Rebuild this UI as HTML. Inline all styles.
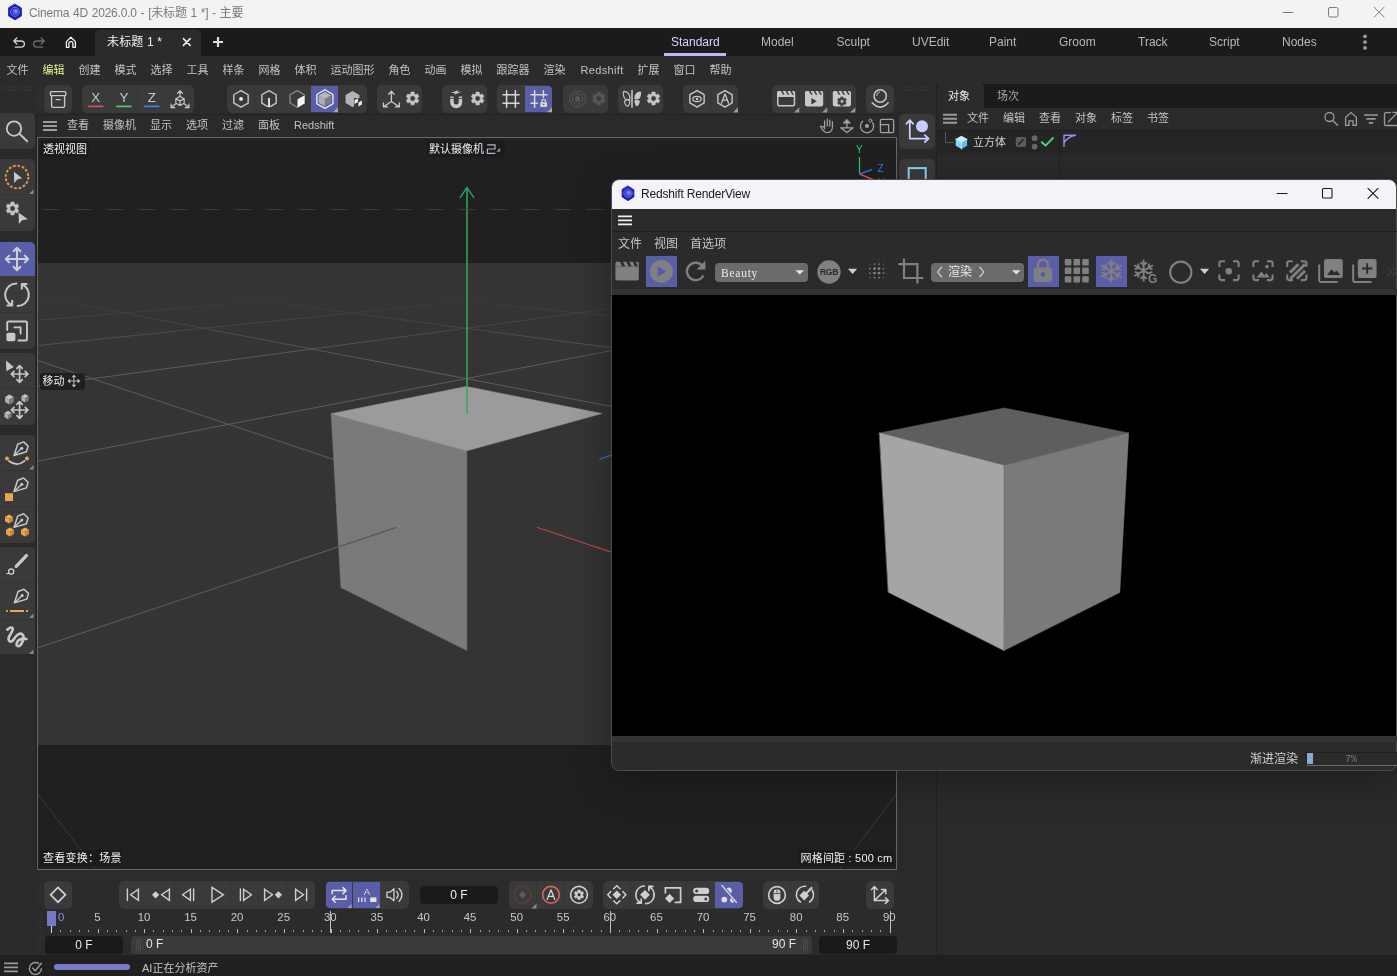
<!DOCTYPE html>
<html lang="zh"><head><meta charset="utf-8"><title>Cinema 4D</title>
<style>
html,body{margin:0;padding:0}
html{background:#2a2a2a}
body{width:1397px;height:976px;position:relative;overflow:hidden;opacity:.999;background:#2a2a2a;font-family:"Liberation Sans","Noto Sans CJK SC",sans-serif;font-size:11px;color:#c3c3c3}
.t{position:absolute;white-space:nowrap;display:block}
.b{position:absolute;box-sizing:border-box}
svg{position:absolute;left:0;top:0;overflow:visible}
svg text{font-family:"Liberation Sans","Noto Sans CJK SC",sans-serif}
</style></head><body>
<!-- base -->
<div class="b" style="left:0px;top:0px;width:1397px;height:28px;background:#f3f3f3;"></div>
<span class="t" style="left:29px;top:5px;font-size:12px;line-height:17px;height:17px;color:#7a7a7a;letter-spacing:-0.19px;word-spacing:0.6px">Cinema 4D 2026.0.0 - [未标题 1 *] - 主要</span>
<div class="b" style="left:0px;top:28px;width:1397px;height:28px;background:#1b1b1b;"></div>
<div class="b" style="left:95px;top:30px;width:106px;height:26px;background:#2b2b2b;border-radius:5px 5px 0 0"></div>
<span class="t" style="left:107px;top:34px;font-size:12px;line-height:17px;height:17px;color:#f0f0f0;letter-spacing:0.15px">未标题 1 *</span>
<span class="t" style="left:671px;top:34px;font-size:12px;line-height:16px;height:16px;color:#d6d6ff;">Standard</span>
<span class="t" style="left:761px;top:34px;font-size:12px;line-height:16px;height:16px;color:#b8b8b8;">Model</span>
<span class="t" style="left:836.6px;top:34px;font-size:12px;line-height:16px;height:16px;color:#b8b8b8;">Sculpt</span>
<span class="t" style="left:912px;top:34px;font-size:12px;line-height:16px;height:16px;color:#b8b8b8;">UVEdit</span>
<span class="t" style="left:989px;top:34px;font-size:12px;line-height:16px;height:16px;color:#b8b8b8;">Paint</span>
<span class="t" style="left:1059px;top:34px;font-size:12px;line-height:16px;height:16px;color:#b8b8b8;">Groom</span>
<span class="t" style="left:1138px;top:34px;font-size:12px;line-height:16px;height:16px;color:#b8b8b8;">Track</span>
<span class="t" style="left:1209px;top:34px;font-size:12px;line-height:16px;height:16px;color:#b8b8b8;">Script</span>
<span class="t" style="left:1282px;top:34px;font-size:12px;line-height:16px;height:16px;color:#b8b8b8;">Nodes</span>
<div class="b" style="left:664px;top:53px;width:62px;height:3px;background:#b9b9f5;"></div>
<div class="b" style="left:0px;top:56px;width:1397px;height:28px;background:#2b2b2b;"></div>
<span class="t" style="left:6.5px;top:62px;font-size:11px;line-height:16px;height:16px;color:#c3c3c3;">文件</span>
<span class="t" style="left:42.5px;top:62px;font-size:11px;line-height:16px;height:16px;color:#e6f08c;">编辑</span>
<span class="t" style="left:78.5px;top:62px;font-size:11px;line-height:16px;height:16px;color:#c3c3c3;">创建</span>
<span class="t" style="left:114.5px;top:62px;font-size:11px;line-height:16px;height:16px;color:#c3c3c3;">模式</span>
<span class="t" style="left:150.5px;top:62px;font-size:11px;line-height:16px;height:16px;color:#c3c3c3;">选择</span>
<span class="t" style="left:186.5px;top:62px;font-size:11px;line-height:16px;height:16px;color:#c3c3c3;">工具</span>
<span class="t" style="left:222.5px;top:62px;font-size:11px;line-height:16px;height:16px;color:#c3c3c3;">样条</span>
<span class="t" style="left:258.5px;top:62px;font-size:11px;line-height:16px;height:16px;color:#c3c3c3;">网格</span>
<span class="t" style="left:294.5px;top:62px;font-size:11px;line-height:16px;height:16px;color:#c3c3c3;">体积</span>
<span class="t" style="left:330.5px;top:62px;font-size:11px;line-height:16px;height:16px;color:#c3c3c3;">运动图形</span>
<span class="t" style="left:388.5px;top:62px;font-size:11px;line-height:16px;height:16px;color:#c3c3c3;">角色</span>
<span class="t" style="left:424.5px;top:62px;font-size:11px;line-height:16px;height:16px;color:#c3c3c3;">动画</span>
<span class="t" style="left:460.5px;top:62px;font-size:11px;line-height:16px;height:16px;color:#c3c3c3;">模拟</span>
<span class="t" style="left:496.5px;top:62px;font-size:11px;line-height:16px;height:16px;color:#c3c3c3;">跟踪器</span>
<span class="t" style="left:543.5px;top:62px;font-size:11px;line-height:16px;height:16px;color:#c3c3c3;">渲染</span>
<span class="t" style="left:580.5px;top:62px;font-size:11px;line-height:16px;height:16px;color:#c3c3c3;letter-spacing:0.35px">Redshift</span>
<span class="t" style="left:637.5px;top:62px;font-size:11px;line-height:16px;height:16px;color:#c3c3c3;">扩展</span>
<span class="t" style="left:673.5px;top:62px;font-size:11px;line-height:16px;height:16px;color:#c3c3c3;">窗口</span>
<span class="t" style="left:709.5px;top:62px;font-size:11px;line-height:16px;height:16px;color:#c3c3c3;">帮助</span>
<div class="b" style="left:0px;top:84px;width:937px;height:30px;background:#2b2b2b;"></div>
<div class="b" style="left:44px;top:85px;width:28px;height:28px;background:#3a3a3a;border-radius:5px"></div>
<div class="b" style="left:82px;top:85px;width:112px;height:28px;background:#3a3a3a;border-radius:5px"></div>
<div class="b" style="left:227px;top:85px;width:140px;height:28px;background:#3a3a3a;border-radius:5px"></div>
<div class="b" style="left:377px;top:85px;width:45px;height:28px;background:#3a3a3a;border-radius:5px"></div>
<div class="b" style="left:442px;top:85px;width:45px;height:28px;background:#3a3a3a;border-radius:5px"></div>
<div class="b" style="left:497px;top:85px;width:55px;height:28px;background:#3a3a3a;border-radius:5px"></div>
<div class="b" style="left:563px;top:85px;width:45px;height:28px;background:#3a3a3a;border-radius:5px"></div>
<div class="b" style="left:618px;top:85px;width:45px;height:28px;background:#3a3a3a;border-radius:5px"></div>
<div class="b" style="left:683px;top:85px;width:55px;height:28px;background:#3a3a3a;border-radius:5px"></div>
<div class="b" style="left:772px;top:85px;width:84px;height:28px;background:#3a3a3a;border-radius:5px"></div>
<div class="b" style="left:866px;top:85px;width:28px;height:28px;background:#3a3a3a;border-radius:5px"></div>
<div class="b" style="left:311px;top:85.8px;width:27.2px;height:26.4px;background:#5a5ea8;"></div>
<div class="b" style="left:525px;top:85.8px;width:27px;height:26.4px;background:#5a5ea8;border-radius:0 4px 4px 0"></div>
<div class="b" style="left:109.3px;top:85px;width:1px;height:28px;background:#343434;"></div>
<div class="b" style="left:137.3px;top:85px;width:1px;height:28px;background:#343434;"></div>
<div class="b" style="left:165.3px;top:85px;width:1px;height:28px;background:#343434;"></div>
<div class="b" style="left:254.3px;top:85px;width:1px;height:28px;background:#343434;"></div>
<div class="b" style="left:282.3px;top:85px;width:1px;height:28px;background:#343434;"></div>
<div class="b" style="left:710.3px;top:85px;width:1px;height:28px;background:#343434;"></div>
<div class="b" style="left:799.3px;top:85px;width:1px;height:28px;background:#343434;"></div>
<div class="b" style="left:827.3px;top:85px;width:1px;height:28px;background:#343434;"></div>
<div class="b" style="left:36px;top:114px;width:861px;height:24px;background:#2a2a2a;"></div>
<div class="b" style="left:36px;top:114px;width:861px;height:1px;background:#222;"></div>
<div class="b" style="left:36px;top:114px;width:1px;height:756px;background:#202020;"></div>
<span class="t" style="left:67px;top:117px;font-size:11px;line-height:16px;height:16px;color:#c3c3c3;">查看</span>
<span class="t" style="left:103px;top:117px;font-size:11px;line-height:16px;height:16px;color:#c3c3c3;">摄像机</span>
<span class="t" style="left:150px;top:117px;font-size:11px;line-height:16px;height:16px;color:#c3c3c3;">显示</span>
<span class="t" style="left:186px;top:117px;font-size:11px;line-height:16px;height:16px;color:#c3c3c3;">选项</span>
<span class="t" style="left:222px;top:117px;font-size:11px;line-height:16px;height:16px;color:#c3c3c3;">过滤</span>
<span class="t" style="left:258px;top:117px;font-size:11px;line-height:16px;height:16px;color:#c3c3c3;">面板</span>
<span class="t" style="left:294px;top:117px;font-size:11px;line-height:16px;height:16px;color:#c3c3c3;">Redshift</span>
<div class="b" style="left:0px;top:113px;width:35px;height:36px;background:#3a3a3a;border-radius:0 5px 5px 0"></div>
<div class="b" style="left:0px;top:159px;width:35px;height:72px;background:#3a3a3a;border-radius:0 5px 5px 0"></div>
<div class="b" style="left:0px;top:242px;width:35px;height:107px;background:#3a3a3a;border-radius:0 5px 5px 0"></div>
<div class="b" style="left:0px;top:353px;width:35px;height:72px;background:#3a3a3a;border-radius:0 5px 5px 0"></div>
<div class="b" style="left:0px;top:435px;width:35px;height:108px;background:#3a3a3a;border-radius:0 5px 5px 0"></div>
<div class="b" style="left:0px;top:547px;width:35px;height:107px;background:#3a3a3a;border-radius:0 5px 5px 0"></div>
<div class="b" style="left:0px;top:242px;width:35px;height:34px;background:#5a5ea8;border-radius:0 5px 0 0"></div>
<div class="b" style="left:0px;top:194.3px;width:35px;height:1px;background:#333;"></div>
<div class="b" style="left:0px;top:311.6px;width:35px;height:1px;background:#333;"></div>
<div class="b" style="left:0px;top:388.4px;width:35px;height:1px;background:#333;"></div>
<div class="b" style="left:0px;top:470.2px;width:35px;height:1px;background:#333;"></div>
<div class="b" style="left:0px;top:506.3px;width:35px;height:1px;background:#333;"></div>
<div class="b" style="left:0px;top:582.4px;width:35px;height:1px;background:#333;"></div>
<div class="b" style="left:0px;top:618.6px;width:35px;height:1px;background:#333;"></div>
<div class="b" style="left:897px;top:84px;width:40px;height:872px;background:#2a2a2a;"></div>
<div class="b" style="left:936px;top:84px;width:1px;height:872px;background:#222;"></div>
<div class="b" style="left:899px;top:114px;width:36px;height:35px;background:#3a3a3a;border-radius:5px"></div>
<div class="b" style="left:899px;top:159px;width:36px;height:40px;background:#3a3a3a;border-radius:5px"></div>
<div class="b" style="left:937px;top:84px;width:460px;height:872px;background:#2a2a2a;"></div>
<div class="b" style="left:937px;top:84px;width:460px;height:24px;background:#1b1b1b;"></div>
<div class="b" style="left:937px;top:84px;width:47px;height:24px;background:#2b2b2b;border-radius:4px 4px 0 0"></div>
<span class="t" style="left:948px;top:88px;font-size:11px;line-height:16px;height:16px;color:#f0f0f0;">对象</span>
<span class="t" style="left:997px;top:88px;font-size:11px;line-height:16px;height:16px;color:#a8a8a8;">场次</span>
<span class="t" style="left:967px;top:110px;font-size:11px;line-height:16px;height:16px;color:#c3c3c3;">文件</span>
<span class="t" style="left:1003px;top:110px;font-size:11px;line-height:16px;height:16px;color:#c3c3c3;">编辑</span>
<span class="t" style="left:1039px;top:110px;font-size:11px;line-height:16px;height:16px;color:#c3c3c3;">查看</span>
<span class="t" style="left:1075px;top:110px;font-size:11px;line-height:16px;height:16px;color:#c3c3c3;">对象</span>
<span class="t" style="left:1111px;top:110px;font-size:11px;line-height:16px;height:16px;color:#c3c3c3;">标签</span>
<span class="t" style="left:1147px;top:110px;font-size:11px;line-height:16px;height:16px;color:#c3c3c3;">书签</span>
<div class="b" style="left:937px;top:130px;width:460px;height:1px;background:#1f1f1f;"></div>
<div class="b" style="left:937px;top:131px;width:460px;height:22px;background:#252525;"></div>
<div class="b" style="left:1059px;top:131px;width:1px;height:640px;background:#1f1f1f;"></div>
<span class="t" style="left:973px;top:134px;font-size:11px;line-height:16px;height:16px;color:#d0d0d0;">立方体</span>
<div class="b" style="left:0px;top:870px;width:897px;height:86px;background:#2b2b2b;"></div>
<div class="b" style="left:44px;top:881px;width:28px;height:28px;background:#3a3a3a;border-radius:5px"></div>
<div class="b" style="left:119px;top:881px;width:196px;height:28px;background:#3a3a3a;border-radius:5px"></div>
<div class="b" style="left:326px;top:881px;width:83px;height:28px;background:#3a3a3a;border-radius:5px"></div>
<div class="b" style="left:509px;top:881px;width:84px;height:28px;background:#3a3a3a;border-radius:5px"></div>
<div class="b" style="left:603px;top:881px;width:140px;height:28px;background:#3a3a3a;border-radius:5px"></div>
<div class="b" style="left:763px;top:881px;width:56px;height:28px;background:#3a3a3a;border-radius:5px"></div>
<div class="b" style="left:866px;top:881px;width:28px;height:28px;background:#3a3a3a;border-radius:5px"></div>
<div class="b" style="left:146.3px;top:881px;width:1px;height:28px;background:#343434;"></div>
<div class="b" style="left:174.3px;top:881px;width:1px;height:28px;background:#343434;"></div>
<div class="b" style="left:202.3px;top:881px;width:1px;height:28px;background:#343434;"></div>
<div class="b" style="left:230.3px;top:881px;width:1px;height:28px;background:#343434;"></div>
<div class="b" style="left:258.3px;top:881px;width:1px;height:28px;background:#343434;"></div>
<div class="b" style="left:286.3px;top:881px;width:1px;height:28px;background:#343434;"></div>
<div class="b" style="left:379.3px;top:881px;width:1px;height:28px;background:#343434;"></div>
<div class="b" style="left:536.3px;top:881px;width:1px;height:28px;background:#343434;"></div>
<div class="b" style="left:564.3px;top:881px;width:1px;height:28px;background:#343434;"></div>
<div class="b" style="left:630.3px;top:881px;width:1px;height:28px;background:#343434;"></div>
<div class="b" style="left:658.3px;top:881px;width:1px;height:28px;background:#343434;"></div>
<div class="b" style="left:686.3px;top:881px;width:1px;height:28px;background:#343434;"></div>
<div class="b" style="left:790.3px;top:881px;width:1px;height:28px;background:#343434;"></div>
<div class="b" style="left:326px;top:881.8px;width:26px;height:26.4px;background:#5a5ea8;border-radius:4px 0 0 4px"></div>
<div class="b" style="left:353px;top:881.8px;width:27px;height:26.4px;background:#5a5ea8;"></div>
<div class="b" style="left:715px;top:881.8px;width:27.6px;height:26.4px;background:#5a5ea8;border-radius:0 4px 4px 0"></div>
<div class="b" style="left:420px;top:886px;width:78px;height:18px;background:#1a1a1a;border-radius:4px"></div>
<span class="t" style="left:420px;top:887px;font-size:12px;line-height:16px;height:16px;color:#f0f0f0;width:78px;text-align:center">0 F</span>
<div class="b" style="left:44px;top:927px;width:853px;height:1px;background:#2e2e2e;"></div>
<div class="b" style="left:51px;top:929px;width:1px;height:4px;background:#b8b8b8;"></div>
<div class="b" style="left:60px;top:930px;width:1px;height:2px;background:#9a9a9a;"></div>
<div class="b" style="left:70px;top:930px;width:1px;height:2px;background:#9a9a9a;"></div>
<div class="b" style="left:79px;top:930px;width:1px;height:2px;background:#9a9a9a;"></div>
<div class="b" style="left:88px;top:930px;width:1px;height:2px;background:#9a9a9a;"></div>
<div class="b" style="left:98px;top:929px;width:1px;height:4px;background:#b8b8b8;"></div>
<div class="b" style="left:107px;top:930px;width:1px;height:2px;background:#9a9a9a;"></div>
<div class="b" style="left:116px;top:930px;width:1px;height:2px;background:#9a9a9a;"></div>
<div class="b" style="left:126px;top:930px;width:1px;height:2px;background:#9a9a9a;"></div>
<div class="b" style="left:135px;top:930px;width:1px;height:2px;background:#9a9a9a;"></div>
<div class="b" style="left:144px;top:929px;width:1px;height:4px;background:#b8b8b8;"></div>
<div class="b" style="left:153px;top:930px;width:1px;height:2px;background:#9a9a9a;"></div>
<div class="b" style="left:163px;top:930px;width:1px;height:2px;background:#9a9a9a;"></div>
<div class="b" style="left:172px;top:930px;width:1px;height:2px;background:#9a9a9a;"></div>
<div class="b" style="left:181px;top:930px;width:1px;height:2px;background:#9a9a9a;"></div>
<div class="b" style="left:191px;top:929px;width:1px;height:4px;background:#b8b8b8;"></div>
<div class="b" style="left:200px;top:930px;width:1px;height:2px;background:#9a9a9a;"></div>
<div class="b" style="left:209px;top:930px;width:1px;height:2px;background:#9a9a9a;"></div>
<div class="b" style="left:219px;top:930px;width:1px;height:2px;background:#9a9a9a;"></div>
<div class="b" style="left:228px;top:930px;width:1px;height:2px;background:#9a9a9a;"></div>
<div class="b" style="left:237px;top:929px;width:1px;height:4px;background:#b8b8b8;"></div>
<div class="b" style="left:247px;top:930px;width:1px;height:2px;background:#9a9a9a;"></div>
<div class="b" style="left:256px;top:930px;width:1px;height:2px;background:#9a9a9a;"></div>
<div class="b" style="left:265px;top:930px;width:1px;height:2px;background:#9a9a9a;"></div>
<div class="b" style="left:275px;top:930px;width:1px;height:2px;background:#9a9a9a;"></div>
<div class="b" style="left:284px;top:929px;width:1px;height:4px;background:#b8b8b8;"></div>
<div class="b" style="left:293px;top:930px;width:1px;height:2px;background:#9a9a9a;"></div>
<div class="b" style="left:303px;top:930px;width:1px;height:2px;background:#9a9a9a;"></div>
<div class="b" style="left:312px;top:930px;width:1px;height:2px;background:#9a9a9a;"></div>
<div class="b" style="left:321px;top:930px;width:1px;height:2px;background:#9a9a9a;"></div>
<div class="b" style="left:331px;top:929px;width:1px;height:4px;background:#b8b8b8;"></div>
<div class="b" style="left:340px;top:930px;width:1px;height:2px;background:#9a9a9a;"></div>
<div class="b" style="left:349px;top:930px;width:1px;height:2px;background:#9a9a9a;"></div>
<div class="b" style="left:358px;top:930px;width:1px;height:2px;background:#9a9a9a;"></div>
<div class="b" style="left:368px;top:930px;width:1px;height:2px;background:#9a9a9a;"></div>
<div class="b" style="left:377px;top:929px;width:1px;height:4px;background:#b8b8b8;"></div>
<div class="b" style="left:386px;top:930px;width:1px;height:2px;background:#9a9a9a;"></div>
<div class="b" style="left:396px;top:930px;width:1px;height:2px;background:#9a9a9a;"></div>
<div class="b" style="left:405px;top:930px;width:1px;height:2px;background:#9a9a9a;"></div>
<div class="b" style="left:414px;top:930px;width:1px;height:2px;background:#9a9a9a;"></div>
<div class="b" style="left:424px;top:929px;width:1px;height:4px;background:#b8b8b8;"></div>
<div class="b" style="left:433px;top:930px;width:1px;height:2px;background:#9a9a9a;"></div>
<div class="b" style="left:442px;top:930px;width:1px;height:2px;background:#9a9a9a;"></div>
<div class="b" style="left:452px;top:930px;width:1px;height:2px;background:#9a9a9a;"></div>
<div class="b" style="left:461px;top:930px;width:1px;height:2px;background:#9a9a9a;"></div>
<div class="b" style="left:470px;top:929px;width:1px;height:4px;background:#b8b8b8;"></div>
<div class="b" style="left:480px;top:930px;width:1px;height:2px;background:#9a9a9a;"></div>
<div class="b" style="left:489px;top:930px;width:1px;height:2px;background:#9a9a9a;"></div>
<div class="b" style="left:498px;top:930px;width:1px;height:2px;background:#9a9a9a;"></div>
<div class="b" style="left:508px;top:930px;width:1px;height:2px;background:#9a9a9a;"></div>
<div class="b" style="left:517px;top:929px;width:1px;height:4px;background:#b8b8b8;"></div>
<div class="b" style="left:526px;top:930px;width:1px;height:2px;background:#9a9a9a;"></div>
<div class="b" style="left:535px;top:930px;width:1px;height:2px;background:#9a9a9a;"></div>
<div class="b" style="left:545px;top:930px;width:1px;height:2px;background:#9a9a9a;"></div>
<div class="b" style="left:554px;top:930px;width:1px;height:2px;background:#9a9a9a;"></div>
<div class="b" style="left:563px;top:929px;width:1px;height:4px;background:#b8b8b8;"></div>
<div class="b" style="left:573px;top:930px;width:1px;height:2px;background:#9a9a9a;"></div>
<div class="b" style="left:582px;top:930px;width:1px;height:2px;background:#9a9a9a;"></div>
<div class="b" style="left:591px;top:930px;width:1px;height:2px;background:#9a9a9a;"></div>
<div class="b" style="left:601px;top:930px;width:1px;height:2px;background:#9a9a9a;"></div>
<div class="b" style="left:610px;top:929px;width:1px;height:4px;background:#b8b8b8;"></div>
<div class="b" style="left:619px;top:930px;width:1px;height:2px;background:#9a9a9a;"></div>
<div class="b" style="left:629px;top:930px;width:1px;height:2px;background:#9a9a9a;"></div>
<div class="b" style="left:638px;top:930px;width:1px;height:2px;background:#9a9a9a;"></div>
<div class="b" style="left:647px;top:930px;width:1px;height:2px;background:#9a9a9a;"></div>
<div class="b" style="left:657px;top:929px;width:1px;height:4px;background:#b8b8b8;"></div>
<div class="b" style="left:666px;top:930px;width:1px;height:2px;background:#9a9a9a;"></div>
<div class="b" style="left:675px;top:930px;width:1px;height:2px;background:#9a9a9a;"></div>
<div class="b" style="left:685px;top:930px;width:1px;height:2px;background:#9a9a9a;"></div>
<div class="b" style="left:694px;top:930px;width:1px;height:2px;background:#9a9a9a;"></div>
<div class="b" style="left:703px;top:929px;width:1px;height:4px;background:#b8b8b8;"></div>
<div class="b" style="left:713px;top:930px;width:1px;height:2px;background:#9a9a9a;"></div>
<div class="b" style="left:722px;top:930px;width:1px;height:2px;background:#9a9a9a;"></div>
<div class="b" style="left:731px;top:930px;width:1px;height:2px;background:#9a9a9a;"></div>
<div class="b" style="left:740px;top:930px;width:1px;height:2px;background:#9a9a9a;"></div>
<div class="b" style="left:750px;top:929px;width:1px;height:4px;background:#b8b8b8;"></div>
<div class="b" style="left:759px;top:930px;width:1px;height:2px;background:#9a9a9a;"></div>
<div class="b" style="left:768px;top:930px;width:1px;height:2px;background:#9a9a9a;"></div>
<div class="b" style="left:778px;top:930px;width:1px;height:2px;background:#9a9a9a;"></div>
<div class="b" style="left:787px;top:930px;width:1px;height:2px;background:#9a9a9a;"></div>
<div class="b" style="left:796px;top:929px;width:1px;height:4px;background:#b8b8b8;"></div>
<div class="b" style="left:806px;top:930px;width:1px;height:2px;background:#9a9a9a;"></div>
<div class="b" style="left:815px;top:930px;width:1px;height:2px;background:#9a9a9a;"></div>
<div class="b" style="left:824px;top:930px;width:1px;height:2px;background:#9a9a9a;"></div>
<div class="b" style="left:834px;top:930px;width:1px;height:2px;background:#9a9a9a;"></div>
<div class="b" style="left:843px;top:929px;width:1px;height:4px;background:#b8b8b8;"></div>
<div class="b" style="left:852px;top:930px;width:1px;height:2px;background:#9a9a9a;"></div>
<div class="b" style="left:862px;top:930px;width:1px;height:2px;background:#9a9a9a;"></div>
<div class="b" style="left:871px;top:930px;width:1px;height:2px;background:#9a9a9a;"></div>
<div class="b" style="left:880px;top:930px;width:1px;height:2px;background:#9a9a9a;"></div>
<div class="b" style="left:890px;top:929px;width:1px;height:4px;background:#b8b8b8;"></div>
<span class="t" style="left:58px;top:910px;font-size:11.4px;line-height:15px;height:15px;color:#8a8fd8;">0</span>
<span class="t" style="left:77.4px;top:910px;font-size:11.4px;line-height:15px;height:15px;color:#c8c8c8;width:40px;text-align:center">5</span>
<span class="t" style="left:124.0px;top:910px;font-size:11.4px;line-height:15px;height:15px;color:#c8c8c8;width:40px;text-align:center">10</span>
<span class="t" style="left:170.6px;top:910px;font-size:11.4px;line-height:15px;height:15px;color:#c8c8c8;width:40px;text-align:center">15</span>
<span class="t" style="left:217.1px;top:910px;font-size:11.4px;line-height:15px;height:15px;color:#c8c8c8;width:40px;text-align:center">20</span>
<span class="t" style="left:263.7px;top:910px;font-size:11.4px;line-height:15px;height:15px;color:#c8c8c8;width:40px;text-align:center">25</span>
<span class="t" style="left:310.3px;top:910px;font-size:11.4px;line-height:15px;height:15px;color:#c8c8c8;width:40px;text-align:center">30</span>
<span class="t" style="left:356.9px;top:910px;font-size:11.4px;line-height:15px;height:15px;color:#c8c8c8;width:40px;text-align:center">35</span>
<span class="t" style="left:403.5px;top:910px;font-size:11.4px;line-height:15px;height:15px;color:#c8c8c8;width:40px;text-align:center">40</span>
<span class="t" style="left:450.1px;top:910px;font-size:11.4px;line-height:15px;height:15px;color:#c8c8c8;width:40px;text-align:center">45</span>
<span class="t" style="left:496.7px;top:910px;font-size:11.4px;line-height:15px;height:15px;color:#c8c8c8;width:40px;text-align:center">50</span>
<span class="t" style="left:543.2px;top:910px;font-size:11.4px;line-height:15px;height:15px;color:#c8c8c8;width:40px;text-align:center">55</span>
<span class="t" style="left:589.8px;top:910px;font-size:11.4px;line-height:15px;height:15px;color:#c8c8c8;width:40px;text-align:center">60</span>
<span class="t" style="left:636.4px;top:910px;font-size:11.4px;line-height:15px;height:15px;color:#c8c8c8;width:40px;text-align:center">65</span>
<span class="t" style="left:683.0px;top:910px;font-size:11.4px;line-height:15px;height:15px;color:#c8c8c8;width:40px;text-align:center">70</span>
<span class="t" style="left:729.6px;top:910px;font-size:11.4px;line-height:15px;height:15px;color:#c8c8c8;width:40px;text-align:center">75</span>
<span class="t" style="left:776.2px;top:910px;font-size:11.4px;line-height:15px;height:15px;color:#c8c8c8;width:40px;text-align:center">80</span>
<span class="t" style="left:822.7px;top:910px;font-size:11.4px;line-height:15px;height:15px;color:#c8c8c8;width:40px;text-align:center">85</span>
<span class="t" style="left:869.3px;top:910px;font-size:11.4px;line-height:15px;height:15px;color:#c8c8c8;width:40px;text-align:center">90</span>
<div class="b" style="left:330px;top:911px;width:1px;height:22px;background:#c0c0c0;"></div>
<div class="b" style="left:610px;top:911px;width:1px;height:22px;background:#c0c0c0;"></div>
<div class="b" style="left:890px;top:911px;width:1px;height:22px;background:#c0c0c0;"></div>
<div class="b" style="left:47px;top:911px;width:9px;height:15px;background:#7579c4;"></div>
<div class="b" style="left:51px;top:926px;width:1px;height:7px;background:#d8d8d8;"></div>
<div class="b" style="left:45px;top:936px;width:78px;height:18px;background:#1a1a1a;border-radius:4px"></div>
<span class="t" style="left:45px;top:937px;font-size:12px;line-height:16px;height:16px;color:#e6e6e6;width:78px;text-align:center">0 F</span>
<div class="b" style="left:131px;top:936px;width:681px;height:18px;background:#3a3a3a;border-radius:4px"></div>
<div class="b" style="left:136px;top:939px;width:1px;height:12px;background:#4a4a4a;"></div>
<div class="b" style="left:138px;top:939px;width:1px;height:12px;background:#4a4a4a;"></div>
<div class="b" style="left:140px;top:939px;width:1px;height:12px;background:#4a4a4a;"></div>
<div class="b" style="left:803px;top:939px;width:1px;height:12px;background:#4a4a4a;"></div>
<div class="b" style="left:805px;top:939px;width:1px;height:12px;background:#4a4a4a;"></div>
<div class="b" style="left:807px;top:939px;width:1px;height:12px;background:#4a4a4a;"></div>
<span class="t" style="left:146px;top:936px;font-size:12px;line-height:16px;height:16px;color:#e6e6e6;">0 F</span>
<span class="t" style="left:760px;top:936px;font-size:12px;line-height:16px;height:16px;color:#e6e6e6;width:36px;text-align:right">90 F</span>
<div class="b" style="left:819px;top:936px;width:78px;height:18px;background:#1a1a1a;border-radius:4px"></div>
<span class="t" style="left:819px;top:937px;font-size:12px;line-height:16px;height:16px;color:#e6e6e6;width:78px;text-align:center">90 F</span>
<div class="b" style="left:0px;top:955px;width:1397px;height:21px;background:#202020;"></div>
<span class="t" style="left:142px;top:960px;font-size:11px;line-height:16px;height:16px;color:#c3c3c3;">AI正在分析资产</span>
<div class="b" style="left:54px;top:964px;width:76px;height:6px;background:#777bc4;border-radius:3px"></div>
<!-- viewport -->
<div class="b" style="left:37px;top:137px;width:860px;height:733px;border:1px solid #686868;background:#202020;overflow:hidden">
<svg width="858" height="731" viewBox="38 138 858 731"><defs><linearGradient id="fade" x1="0" y1="0" x2="0" y2="1" gradientUnits="objectBoundingBox"><stop offset="0" stop-color="#000"/></linearGradient><linearGradient id="mg" gradientUnits="userSpaceOnUse" x1="0" y1="138" x2="0" y2="869"><stop offset="0.2134" stop-color="rgb(0,0,0)"/><stop offset="0.3064" stop-color="rgb(255,255,255)"/><stop offset="0.8302" stop-color="rgb(255,255,255)"/><stop offset="0.8304" stop-color="rgb(110,110,110)"/><stop offset="1.0000" stop-color="rgb(110,110,110)"/></linearGradient><mask id="gm" maskUnits="userSpaceOnUse" x="38" y="138" width="858" height="731"><rect x="38" y="138" width="858" height="731" fill="url(#mg)"/></mask></defs><rect x="38" y="263" width="858" height="482" fill="#343434"/><g mask="url(#gm)" stroke="#5e5e5e" stroke-width="1" fill="none"><line x1="-10.0" y1="225.0" x2="465.3" y2="219.8"/><line x1="-10.0" y1="225.3" x2="476.0" y2="219.9"/><line x1="-10.0" y1="225.7" x2="487.0" y2="220.0"/><line x1="-10.0" y1="226.1" x2="498.2" y2="220.1"/><line x1="-10.0" y1="226.5" x2="509.8" y2="220.3"/><line x1="-10.0" y1="227.0" x2="521.6" y2="220.4"/><line x1="-10.0" y1="227.5" x2="533.8" y2="220.5"/><line x1="-10.0" y1="228.0" x2="546.3" y2="220.7"/><line x1="-10.0" y1="228.5" x2="559.1" y2="220.8"/><line x1="-10.0" y1="229.1" x2="572.2" y2="220.9"/><line x1="-10.0" y1="229.7" x2="585.8" y2="221.1"/><line x1="-10.0" y1="230.3" x2="599.7" y2="221.2"/><line x1="-10.0" y1="231.0" x2="614.0" y2="221.4"/><line x1="-10.0" y1="231.7" x2="628.7" y2="221.6"/><line x1="-10.0" y1="232.5" x2="643.8" y2="221.7"/><line x1="-10.0" y1="233.4" x2="659.4" y2="221.9"/><line x1="-10.0" y1="234.3" x2="675.4" y2="222.1"/><line x1="-10.0" y1="235.3" x2="691.9" y2="222.2"/><line x1="-10.0" y1="236.3" x2="709.0" y2="222.4"/><line x1="-10.0" y1="237.5" x2="726.5" y2="222.6"/><line x1="-10.0" y1="238.8" x2="744.6" y2="222.8"/><line x1="-10.0" y1="240.2" x2="763.4" y2="223.0"/><line x1="-10.0" y1="241.7" x2="782.7" y2="223.2"/><line x1="-10.0" y1="243.4" x2="802.7" y2="223.5"/><line x1="-10.0" y1="245.4" x2="823.3" y2="223.7"/><line x1="-10.0" y1="247.5" x2="844.7" y2="223.9"/><line x1="-10.0" y1="249.9" x2="866.8" y2="224.2"/><line x1="-10.0" y1="252.7" x2="889.7" y2="224.4"/><line x1="-10.0" y1="255.9" x2="913.5" y2="224.7"/><line x1="-10.0" y1="259.6" x2="938.1" y2="224.9"/><line x1="-10.0" y1="263.9" x2="940.0" y2="226.1"/><line x1="-10.0" y1="269.1" x2="940.0" y2="227.7"/><line x1="-10.0" y1="275.4" x2="940.0" y2="229.6"/><line x1="-10.0" y1="283.3" x2="940.0" y2="231.9"/><line x1="-10.0" y1="293.2" x2="940.0" y2="234.8"/><line x1="-10.0" y1="306.3" x2="940.0" y2="238.7"/><line x1="-10.0" y1="324.3" x2="940.0" y2="244.0"/><line x1="-10.0" y1="350.5" x2="940.0" y2="251.8"/><line x1="-10.0" y1="392.5" x2="940.0" y2="264.2"/><line x1="-10.0" y1="470.3" x2="940.0" y2="287.3"/><line x1="-10.0" y1="732.0" x2="119.5" y2="900.0"/><line x1="816.1" y1="900.0" x2="940.0" y2="736.9"/><line x1="-10.0" y1="287.3" x2="940.0" y2="469.5"/><line x1="-10.0" y1="264.3" x2="940.0" y2="392.0"/><line x1="-10.0" y1="251.9" x2="940.0" y2="350.2"/><line x1="-10.0" y1="244.1" x2="940.0" y2="324.0"/><line x1="-10.0" y1="238.7" x2="940.0" y2="306.1"/><line x1="-10.0" y1="234.9" x2="940.0" y2="293.0"/><line x1="-10.0" y1="231.9" x2="940.0" y2="283.1"/><line x1="-10.0" y1="229.6" x2="940.0" y2="275.3"/><line x1="-10.0" y1="227.7" x2="940.0" y2="269.0"/><line x1="-10.0" y1="226.2" x2="940.0" y2="263.8"/><line x1="-8.4" y1="225.0" x2="940.0" y2="259.5"/><line x1="16.4" y1="224.7" x2="940.0" y2="255.8"/><line x1="40.2" y1="224.4" x2="940.0" y2="252.6"/><line x1="63.2" y1="224.2" x2="940.0" y2="249.9"/><line x1="85.3" y1="223.9" x2="940.0" y2="247.4"/><line x1="106.8" y1="223.7" x2="940.0" y2="245.3"/><line x1="127.5" y1="223.5" x2="940.0" y2="243.4"/><line x1="147.5" y1="223.2" x2="940.0" y2="241.7"/><line x1="166.9" y1="223.0" x2="940.0" y2="240.1"/><line x1="185.6" y1="222.8" x2="940.0" y2="238.7"/><line x1="203.8" y1="222.6" x2="940.0" y2="237.5"/><line x1="221.4" y1="222.4" x2="940.0" y2="236.3"/><line x1="238.4" y1="222.3" x2="940.0" y2="235.2"/><line x1="255.0" y1="222.1" x2="940.0" y2="234.2"/><line x1="271.0" y1="221.9" x2="940.0" y2="233.3"/><line x1="286.6" y1="221.7" x2="940.0" y2="232.5"/><line x1="301.8" y1="221.6" x2="940.0" y2="231.7"/><line x1="316.5" y1="221.4" x2="940.0" y2="231.0"/><line x1="330.8" y1="221.2" x2="940.0" y2="230.3"/><line x1="344.7" y1="221.1" x2="940.0" y2="229.6"/><line x1="358.2" y1="220.9" x2="940.0" y2="229.0"/><line x1="371.4" y1="220.8" x2="940.0" y2="228.5"/><line x1="384.2" y1="220.7" x2="940.0" y2="227.9"/><line x1="396.7" y1="220.5" x2="940.0" y2="227.4"/><line x1="408.9" y1="220.4" x2="940.0" y2="227.0"/><line x1="420.7" y1="220.3" x2="940.0" y2="226.5"/><line x1="432.3" y1="220.1" x2="940.0" y2="226.1"/><line x1="443.5" y1="220.0" x2="940.0" y2="225.7"/><line x1="454.5" y1="219.9" x2="940.0" y2="225.3"/><line x1="465.3" y1="219.8" x2="940.0" y2="224.9"/></g><g mask="url(#gm)"><line x1="-10.0" y1="344.6" x2="466.5" y2="503.8" stroke="#5e5e5e" stroke-width="1"/><line x1="-10.0" y1="663.9" x2="466.5" y2="503.8" stroke="#5e5e5e" stroke-width="1"/></g><line x1="466.5" y1="503.8" x2="940.0" y2="661.9" stroke="#c84a4a" stroke-width="1"/><line x1="466.5" y1="503.8" x2="940.0" y2="344.7" stroke="#2f6fd0" stroke-width="1.3"/><polygon points="466.8,450.8 601.9,413.6 592.1,587.4 466.8,650.6" fill="#343434"/><polygon points="331.1,413.7 466.8,450.8 466.8,650.6 340.9,587.6" fill="#7a7a7a" stroke="#7a7a7a" stroke-width="0.5"/><polygon points="331.1,413.7 466.4,386.4 601.9,413.6 466.8,450.8" fill="#9b9b9b" stroke="#9b9b9b" stroke-width="0.5"/><line x1="537.0" y1="527.3" x2="1417.6" y2="821.5" stroke="#c84a4a"/><line x1="396.3" y1="527.4" x2="286.0" y2="564.5" stroke="#585858" stroke-width="1.3"/><line x1="467" y1="413.6" x2="467" y2="188" stroke="#2fa866" stroke-width="1.5"/><polyline points="460,197.8 467,187.4 474,197.8" fill="none" stroke="#2fa866" stroke-width="1.3"/><line x1="43" y1="209.5" x2="896" y2="209.5" stroke="#3c3c3c" stroke-width="1" stroke-dasharray="16 16"/><line x1="859.5" y1="174" x2="859.5" y2="157" stroke="#2ecc71" stroke-width="1.2"/><line x1="859.5" y1="174" x2="872" y2="169.5" stroke="#2f6fe0" stroke-width="1.6"/><line x1="859.5" y1="174" x2="874" y2="180" stroke="#e05050" stroke-width="1.4"/><text x="856" y="153" font-size="10" fill="#2ecc71">Y</text><text x="877.5" y="172" font-size="10" fill="#3a7cf0">Z</text><text x="878" y="186" font-size="10" fill="#e05050">X</text></svg>
</div>
<span class="t" style="left:40px;top:140.5px;font-size:11px;line-height:16.5px;height:16.5px;color:#f0f0f0;background:rgba(26,26,26,.78);border-radius:3px;padding:0 3px;box-sizing:border-box;width:48.5px">透视视图</span>
<span class="t" style="left:427px;top:140.5px;font-size:11px;line-height:16.5px;height:16.5px;color:#f0f0f0;background:rgba(26,26,26,.78);border-radius:3px;padding:0 3px;box-sizing:border-box;width:77.5px;padding-left:2px">默认摄像机</span>
<span class="t" style="left:40px;top:372.5px;font-size:11px;line-height:17px;height:17px;color:#f0f0f0;background:rgba(26,26,26,.78);border-radius:3px;padding:0 3px;box-sizing:border-box;width:45px;padding-left:2.5px">移动</span>
<span class="t" style="left:40px;top:849.5px;font-size:11px;line-height:16.5px;height:16.5px;color:#f0f0f0;background:rgba(26,26,26,.78);border-radius:3px;padding:0 3px;box-sizing:border-box;width:82px;letter-spacing:0.25px">查看变换：场景</span>
<span class="t" style="left:797.5px;top:849.5px;font-size:11px;line-height:16.5px;height:16.5px;color:#f0f0f0;background:rgba(26,26,26,.78);border-radius:3px;padding:0 3px;box-sizing:border-box;width:96px;letter-spacing:0.2px">网格间距 : 500 cm</span>
<svg width="1397" height="976" viewBox="0 0 1397 976" fill="none" stroke-linecap="round" stroke-linejoin="round"><path d="M487.2 144.8H495V149H487.4V153.4H495.4" stroke="#b4b4c4" stroke-width="1.2" stroke-linejoin="miter" stroke-linecap="butt"/><path d="M497.2 151.2L499.8 148.4V151.2Z" fill="#9aa0c8" stroke="#9aa0c8" stroke-width="0.5"/><path d="M68.6 381H79.2M73.9 375.7V386.3" stroke="#b0b0b0" stroke-width="1.1"/><path d="M67.6 381L70.2 378.6V383.4ZM80.2 381L77.6 378.6V383.4ZM73.9 374.7L71.5 377.3H76.3ZM73.9 387.3L71.5 384.7H76.3Z" fill="#c0c0c0"/></svg>
<!-- mainicons -->
<svg width="1397" height="976" viewBox="0 0 1397 976" fill="none" stroke-linecap="round" stroke-linejoin="round">
<defs><radialGradient id="lg" cx="0.62" cy="0.35" r="0.7"><stop offset="0" stop-color="#78a4ff"/><stop offset="0.5" stop-color="#5a66f4"/><stop offset="1" stop-color="#4a3fe0"/></radialGradient><pattern id="dots" x="40.5" y="873.5" width="3" height="3" patternUnits="userSpaceOnUse"><rect width="1" height="1" fill="#414141"/></pattern><pattern id="dots2" x="37.5" y="885" width="3" height="3" patternUnits="userSpaceOnUse"><rect width="1" height="1" fill="#414141"/></pattern></defs>
<polygon points="15.00,4.20 21.32,8.10 21.32,15.90 15.00,19.80 8.68,15.90 8.68,8.10" fill="#1d1fa8" stroke="#1d1fa8" stroke-width="1"/><circle cx="15" cy="11.8" r="4.5" fill="#2a2cc0" stroke="#5b78f0" stroke-width="1.0"/><circle cx="15.2" cy="11.9" r="3.1" fill="url(#lg)"/>
<g stroke="#7a7a7a" stroke-width="1"><path d="M1283 12.5H1293"/><rect x="1328.5" y="7.5" width="9.5" height="9.5" rx="1.5"/><path d="M1374.2 7.3l9.8 9.8M1384 7.3l-9.8 9.8"/></g>
<g stroke="#d2d2d2" stroke-width="1.3"><path d="M16.8 38L13.8 41l3 3M14.1 41H21a3.4 3.1 0 0 1 0 6.2H15.3"/></g>
<g stroke="#6e6e6e" stroke-width="1.3"><path d="M41.2 38L44.2 41l-3 3M43.9 41H37a3.4 3.1 0 0 0 0 6.2H42.7"/></g>
<path d="M66.4 41.6L70.9 37.3L75.4 41.6V47.3H72.9V43.6a2 2 0 0 0-4 0V47.3H66.4Z" stroke="#f2f2f2" stroke-width="1.3"/>
<path d="M183.4 38.6l6.8 6.8M190.2 38.6l-6.8 6.8" stroke="#f0f0f0" stroke-width="1.5"/>
<path d="M213 42h10M218 37v10" stroke="#dcdcdc" stroke-width="2.2" stroke-linecap="butt"/>
<g fill="#9a9a9a"><circle cx="1365" cy="36.3" r="1.9"/><circle cx="1365" cy="42.1" r="1.9"/><circle cx="1365" cy="47.9" r="1.9"/></g>
<g fill="#464646"><rect x="3" y="86.5" width="1" height="1"/><rect x="3" y="89.5" width="1" height="1"/><rect x="6" y="86.5" width="1" height="1"/><rect x="6" y="89.5" width="1" height="1"/><rect x="9" y="86.5" width="1" height="1"/><rect x="9" y="89.5" width="1" height="1"/><rect x="12" y="86.5" width="1" height="1"/><rect x="12" y="89.5" width="1" height="1"/><rect x="15" y="86.5" width="1" height="1"/><rect x="15" y="89.5" width="1" height="1"/><rect x="18" y="86.5" width="1" height="1"/><rect x="18" y="89.5" width="1" height="1"/><rect x="21" y="86.5" width="1" height="1"/><rect x="21" y="89.5" width="1" height="1"/><rect x="24" y="86.5" width="1" height="1"/><rect x="24" y="89.5" width="1" height="1"/><rect x="27" y="86.5" width="1" height="1"/><rect x="27" y="89.5" width="1" height="1"/><rect x="30" y="86.5" width="1" height="1"/><rect x="30" y="89.5" width="1" height="1"/><rect x="37.5" y="90" width="1" height="1"/><rect x="40.5" y="90" width="1" height="1"/><rect x="37.5" y="93" width="1" height="1"/><rect x="40.5" y="93" width="1" height="1"/><rect x="37.5" y="96" width="1" height="1"/><rect x="40.5" y="96" width="1" height="1"/><rect x="37.5" y="99" width="1" height="1"/><rect x="40.5" y="99" width="1" height="1"/><rect x="37.5" y="102" width="1" height="1"/><rect x="40.5" y="102" width="1" height="1"/><rect x="37.5" y="105" width="1" height="1"/><rect x="40.5" y="105" width="1" height="1"/><rect x="37.5" y="108" width="1" height="1"/><rect x="40.5" y="108" width="1" height="1"/><rect x="902" y="86.5" width="1" height="1"/><rect x="902" y="89.5" width="1" height="1"/><rect x="905" y="86.5" width="1" height="1"/><rect x="905" y="89.5" width="1" height="1"/><rect x="908" y="86.5" width="1" height="1"/><rect x="908" y="89.5" width="1" height="1"/><rect x="911" y="86.5" width="1" height="1"/><rect x="911" y="89.5" width="1" height="1"/><rect x="914" y="86.5" width="1" height="1"/><rect x="914" y="89.5" width="1" height="1"/><rect x="917" y="86.5" width="1" height="1"/><rect x="917" y="89.5" width="1" height="1"/><rect x="920" y="86.5" width="1" height="1"/><rect x="920" y="89.5" width="1" height="1"/><rect x="923" y="86.5" width="1" height="1"/><rect x="923" y="89.5" width="1" height="1"/><rect x="926" y="86.5" width="1" height="1"/><rect x="926" y="89.5" width="1" height="1"/><rect x="929" y="86.5" width="1" height="1"/><rect x="929" y="89.5" width="1" height="1"/></g>
<g stroke="#c8c8c8" stroke-width="1.4"><rect x="50.4" y="91.6" width="15.4" height="4" rx="1"/><path d="M51.6 95.6V106a1.4 1.4 0 0 0 1.4 1.4H63.2a1.4 1.4 0 0 0 1.4 -1.4V95.6M56 99.6h4.2"/></g>
<text x="95.8" y="101.7" font-size="13.4" text-anchor="middle" fill="#cacaca" stroke="none">X</text>
<path d="M88.8 106.4h14" stroke="#d25454" stroke-width="1.6"/>
<text x="123.9" y="101.7" font-size="13.4" text-anchor="middle" fill="#cacaca" stroke="none">Y</text>
<path d="M116.9 106.4h14" stroke="#4ec86a" stroke-width="1.6"/>
<text x="151.8" y="101.7" font-size="13.4" text-anchor="middle" fill="#cacaca" stroke="none">Z</text>
<path d="M144.8 106.4h14" stroke="#3b84da" stroke-width="1.6"/>
<g stroke="#c8c8c8" stroke-width="1.2"><path d="M180 91.0v5.5M177.4 93.3L180 90.7L182.6 93.3"/><path d="M180 96.5l4.2 2.2v4.6l-4.2 2.2l-4.2 -2.2v-4.6ZM175.8 98.7l4.2 2.2l4.2 -2.2M180 100.9v4.6"/><path d="M175.4 104.0L171.4 107.5M171.1 104.1V107.7H174.8M184.6 104.0L188.6 107.5M188.9 104.1V107.7H185.2"/></g>
<polygon points="241.00,90.60 248.19,94.75 248.19,103.05 241.00,107.20 233.81,103.05 233.81,94.75" stroke="#c8c8c8" stroke-width="1.4"/><circle cx="241" cy="98.9" r="1.9" fill="#f0f0f0"/>
<path d="M267.40 106.30L261.81 103.05L261.81 94.75L269.00 90.60L276.19 94.75L276.19 103.05L270.60 106.30" stroke="#c8c8c8" stroke-width="1.4"/><path d="M269 97.9V107.2" stroke="#f0f0f0" stroke-width="1.8" stroke-linecap="butt"/>
<path d="M297.2 107.2L290.01 103.05L290.01 94.75L297.20 90.60L304.39 94.75" stroke="#8c8c8c" stroke-width="1.3"/><path d="M297.5 99.30000000000001L304.69 95.35L304.69 103.45L297.5 107.7Z" fill="#f4f4f4"/>
<polygon points="324.90,89.80 332.95,94.45 332.95,103.75 324.90,108.40 316.85,103.75 316.85,94.45" stroke="#f2f2f2" stroke-width="1.3"/>
<path d="M324.90 91.90L331.14 95.50L324.9 99.10000000000001L318.66 95.50Z" fill="#b9b9b9"/><path d="M318.66 95.50L324.9 99.10000000000001L324.90 106.30L318.66 102.70Z" fill="#b0b0b0"/><path d="M324.9 99.10000000000001L331.14 95.50L331.14 102.70L324.90 106.30Z" fill="#7d7d7d"/>
<path d="M338 112.2h-5L338 107.2Z" fill="#a8a8a8"/>
<path d="M352.50 90.90L359.43 94.90L359.43 97.9L354 97.9L354 106.40L352.50 106.90L345.57 102.90L345.57 94.90Z" fill="#b4b4b4"/>
<path d="M354.6 100.10000000000001l3.3 -1.9v3.9l-3.3 1.9ZM358.5 102.5l3.3 -1.9v3.9l-3.3 1.9Z" fill="#f4f4f4"/>
<g stroke="#c8c8c8" stroke-width="1.3"><path d="M391.4 101.5V91.5M388.7 94.2L391.4 91.3L394.09999999999997 94.2M391.4 101.5L383.79999999999995 106.6M383.4 102.9V106.9H387.4M391.4 101.5L399.0 106.6M399.4 102.9V106.9H395.4"/></g>
<path d="M410.83 93.99L411.02 92.04L414.18 92.04L414.37 93.99L415.58 94.69L417.36 93.88L418.94 96.61L417.35 97.75L417.35 99.15L418.94 100.29L417.36 103.02L415.58 102.21L414.37 102.91L414.18 104.86L411.02 104.86L410.83 102.91L409.62 102.21L407.84 103.02L406.26 100.29L407.85 99.15L407.85 97.75L406.26 96.61L407.84 93.88L409.62 94.69ZM409.90 98.45a2.70 2.70 0 1 0 5.40 0a2.70 2.70 0 1 0 -5.40 0Z" fill="#c6c6c6" fill-rule="evenodd" stroke="#c6c6c6" stroke-width="0.6" stroke-linejoin="round"/>
<path d="M450.2 96.39999999999999V102.19999999999999a6 6 0 0 0 12 0V96.39999999999999H458.7V102.0a2.5 2.5 0 0 1 -5 0V96.39999999999999Z" fill="#c8c8c8"/>
<path d="M449.8 98.39999999999999H454.0M458.4 98.39999999999999H462.59999999999997" stroke="#3a3a3a" stroke-width="0.9" stroke-linecap="butt"/>
<path d="M450.8 92.7L458.2 90.3L457.5 92.1L461.4 91.7L454.4 94.7L455 92.9Z" fill="#c8c8c8"/>
<path d="M475.83 94.04L476.02 92.09L479.18 92.09L479.37 94.04L480.58 94.74L482.36 93.93L483.94 96.66L482.35 97.80L482.35 99.20L483.94 100.34L482.36 103.07L480.58 102.26L479.37 102.96L479.18 104.91L476.02 104.91L475.83 102.96L474.62 102.26L472.84 103.07L471.26 100.34L472.85 99.20L472.85 97.80L471.26 96.66L472.84 93.93L474.62 94.74ZM474.90 98.50a2.70 2.70 0 1 0 5.40 0a2.70 2.70 0 1 0 -5.40 0Z" fill="#c6c6c6" fill-rule="evenodd" stroke="#c6c6c6" stroke-width="0.6" stroke-linejoin="round"/>
<path d="M506.6 90.8V107.2M515.4 90.8V107.2M503 94.7H519M503 103.3H519" stroke="#d8d8d8" stroke-width="1.5"/>
<path d="M534.6 90.8V107.2M543.4 90.8V97.2M531 94.7H547M531 103.3H537.4" stroke="#d8d8d8" stroke-width="1.5"/>
<rect x="540.3" y="102.2" width="6.8" height="4.9" rx="0.8" fill="#d8d8d8"/><path d="M541.9 102.2v-1a1.8 1.8 0 0 1 3.6 0v1" stroke="#d8d8d8" stroke-width="1.2"/><circle cx="543.7" cy="104.6" r="0.8" fill="#5a5ea8"/>
<path d="M552 112.2h-5L552 107.2Z" fill="#a8a8a8"/>
<g stroke="#575757" stroke-width="1"><circle cx="577.6" cy="99" r="8"/><circle cx="577.6" cy="99" r="5.2"/></g><circle cx="577.6" cy="99" r="2.7" fill="#575757"/>
<path d="M597.03 94.04L597.22 92.09L600.38 92.09L600.57 94.04L601.78 94.74L603.56 93.93L605.14 96.66L603.55 97.80L603.55 99.20L605.14 100.34L603.56 103.07L601.78 102.26L600.57 102.96L600.38 104.91L597.22 104.91L597.03 102.96L595.82 102.26L594.04 103.07L592.46 100.34L594.05 99.20L594.05 97.80L592.46 96.66L594.04 93.93L595.82 94.74ZM596.10 98.50a2.70 2.70 0 1 0 5.40 0a2.70 2.70 0 1 0 -5.40 0Z" fill="#575757" fill-rule="evenodd" stroke="#575757" stroke-width="0.6" stroke-linejoin="round"/>
<path d="M632 90V107.8" stroke="#a8a8a8" stroke-width="2" stroke-linecap="butt"/>
<path d="M634.40 99.3C634.20 95,636.00 91.8,640.20 91.4C641.40 91.4,641.20 93,640.80 95.5C640.40 97.6,639.40 99.2,637.80 99.6ZM634.50 100.4C636.20 99.8,638.80 100.2,639.80 101C639.80 103.4,638.40 106,636.60 106.2C635.20 105.4,634.50 103,634.50 100.4Z" fill="#c8c8c8"/>
<path d="M629.60 99.3C629.80 95,628.00 91.8,623.80 91.4C622.60 91.4,622.80 93,623.20 95.5C623.60 97.6,624.60 99.2,626.20 99.6ZM629.50 100.4C627.80 99.8,625.20 100.2,624.20 101C624.20 103.4,625.60 106,627.40 106.2C628.80 105.4,629.50 103,629.50 100.4Z" stroke="#c8c8c8" stroke-width="1.1" transform="translate(0.3,0)"/>
<path d="M651.73 94.04L651.92 92.09L655.08 92.09L655.27 94.04L656.48 94.74L658.26 93.93L659.84 96.66L658.25 97.80L658.25 99.20L659.84 100.34L658.26 103.07L656.48 102.26L655.27 102.96L655.08 104.91L651.92 104.91L651.73 102.96L650.52 102.26L648.74 103.07L647.16 100.34L648.75 99.20L648.75 97.80L647.16 96.66L648.74 93.93L650.52 94.74ZM650.80 98.50a2.70 2.70 0 1 0 5.40 0a2.70 2.70 0 1 0 -5.40 0Z" fill="#c6c6c6" fill-rule="evenodd" stroke="#c6c6c6" stroke-width="0.6" stroke-linejoin="round"/>
<polygon points="697.00,90.55 704.14,94.67 704.14,102.92 697.00,107.05 689.86,102.92 689.86,94.67" stroke="#c8c8c8" stroke-width="1.4"/>
<ellipse cx="697" cy="99.0" rx="4.2" ry="2.7" stroke="#c8c8c8" stroke-width="1.2"/><circle cx="697" cy="99.0" r="1.3" fill="#c8c8c8"/>
<polygon points="725.00,90.55 732.14,94.67 732.14,102.92 725.00,107.05 717.86,102.92 717.86,94.67" stroke="#c8c8c8" stroke-width="1.4"/>
<path d="M721.4 103.2L725 94.0L728.6 103.2M722.6 100.2H727.4" stroke="#c8c8c8" stroke-width="1.3"/>
<path d="M738 112.4h-5.2L738 107.2Z" fill="#989898"/>
<path d="M778.6 91.0H793.6a1.6 1.6 0 0 1 1.6 1.6V104.6a1.8 1.8 0 0 1 -1.8 1.8H778.8a1.8 1.8 0 0 1 -1.8 -1.8V92.6a1.6 1.6 0 0 1 1.6 -1.6Z" fill="#c8c8c8"/><rect x="778.5" y="96.9" width="15.2" height="8.0" rx="0.6" fill="#3a3a3a"/><path d="M780.7 90.8h1.7L784.7 94.7h-1.7ZM785.4 90.8h1.7L789.4 94.7h-1.7ZM790.0 90.8h1.7L794.0 94.7h-1.7Z" fill="#3a3a3a"/>
<path d="M799.3 112.4h-5.2L799.3 107.2Z" fill="#989898"/>
<path d="M806.6 91.0H821.6a1.6 1.6 0 0 1 1.6 1.6V104.6a1.8 1.8 0 0 1 -1.8 1.8H806.8a1.8 1.8 0 0 1 -1.8 -1.8V92.6a1.6 1.6 0 0 1 1.6 -1.6Z" fill="#c8c8c8"/><path d="M808.7 90.8h1.7L812.7 94.7h-1.7ZM813.4 90.8h1.7L817.4 94.7h-1.7ZM818.0 90.8h1.7L822.0 94.7h-1.7Z" fill="#3a3a3a"/><path d="M811.4 98v6.4l5.4 -3.2Z" fill="#3a3a3a"/>
<path d="M827.3 112.4h-5.2L827.3 107.2Z" fill="#989898"/>
<path d="M834.4 91.0H849.4a1.6 1.6 0 0 1 1.6 1.6V104.6a1.8 1.8 0 0 1 -1.8 1.8H834.6a1.8 1.8 0 0 1 -1.8 -1.8V92.6a1.6 1.6 0 0 1 1.6 -1.6Z" fill="#c8c8c8"/><path d="M836.5 90.8h1.7L840.5 94.7h-1.7ZM841.1 90.8h1.7L845.1 94.7h-1.7ZM845.8 90.8h1.7L849.8 94.7h-1.7Z" fill="#3a3a3a"/><path d="M840.69 98.33L840.80 96.93L843.00 96.93L843.11 98.33L843.95 98.81L845.22 98.21L846.32 100.12L845.16 100.92L845.16 101.88L846.32 102.68L845.22 104.59L843.95 103.99L843.11 104.47L843.00 105.87L840.80 105.87L840.69 104.47L839.85 103.99L838.58 104.59L837.48 102.68L838.64 101.88L838.64 100.92L837.48 100.12L838.58 98.21L839.85 98.81ZM840.10 101.40a1.80 1.80 0 1 0 3.60 0a1.80 1.80 0 1 0 -3.60 0Z" fill="#3a3a3a" fill-rule="evenodd" stroke="#3a3a3a" stroke-width="0.6" stroke-linejoin="round"/>
<path d="M855.3 112.4h-5.2L855.3 107.2Z" fill="#989898"/>
<circle cx="880.2" cy="96" r="6.2" stroke="#c8c8c8" stroke-width="1.5"/><path d="M876.6 95.6a3.8 3.8 0 0 1 3 -3.5" stroke="#c8c8c8" stroke-width="1"/><path d="M872.2 102.8Q880.2 111.4 888.2 102.8" stroke="#c8c8c8" stroke-width="1.6"/>
<circle cx="14" cy="128.6" r="7.2" stroke="#c8c8c8" stroke-width="1.8"/><path d="M19.3 133.8L27.2 141.3" stroke="#c8c8c8" stroke-width="1.9"/>
<path d="M43 122H57M43 126H57M43 130H57" stroke="#9c9c9c" stroke-width="2" stroke-linecap="butt"/>
<circle cx="17" cy="177" r="11.3" stroke="#e09c4a" stroke-width="2" stroke-dasharray="2.7 1.7375" stroke-linecap="butt"/>
<path d="M14 171.8L22.2 178.3L17.6 179.2L14.2 183Z" fill="#c8c8c8"/>
<path d="M33.5 194h-4.5L33.5 189.5Z" fill="#8a8a8a"/>
<path d="M10.73 204.04L10.92 202.09L14.08 202.09L14.27 204.04L15.48 204.74L17.26 203.93L18.84 206.66L17.25 207.80L17.25 209.20L18.84 210.34L17.26 213.07L15.48 212.26L14.27 212.96L14.08 214.91L10.92 214.91L10.73 212.96L9.52 212.26L7.74 213.07L6.16 210.34L7.75 209.20L7.75 207.80L6.16 206.66L7.74 203.93L9.52 204.74ZM9.80 208.50a2.70 2.70 0 1 0 5.40 0a2.70 2.70 0 1 0 -5.40 0Z" fill="#c6c6c6" fill-rule="evenodd" stroke="#c6c6c6" stroke-width="0.6" stroke-linejoin="round"/>
<path d="M18.6 212.4L27.8 219.2L22.2 220.2L18.9 224Z" fill="#c8c8c8"/>
<path d="M5.800000000000001 259H28.2M17 247.8V270.2M9.200000000000001 255.6L5.800000000000001 259L9.200000000000001 262.4M24.8 255.6L28.2 259L24.8 262.4M13.6 251.20000000000002L17 247.8L20.4 251.20000000000002M13.6 266.8L17 270.2L20.4 266.8" stroke="#d0d0d0" stroke-width="2.0"/>
<path d="M17.6 306.0A11.3 11.3 0 0 0 22 284.3M26.6 283.9H21.8V288.7" stroke="#c8c8c8" stroke-width="2"/>
<path d="M16.4 283.4A11.3 11.3 0 0 0 12 305.09999999999997M7.4 305.5H12.2V300.7" stroke="#c8c8c8" stroke-width="2"/>
<path d="M7.2 330V322.8a1.3 1.3 0 0 1 1.3 -1.3H25.7a1.3 1.3 0 0 1 1.3 1.3V339.2a1.3 1.3 0 0 1 -1.3 1.3H18.4M14.4 327.4H20.6V333.6" stroke="#c8c8c8" stroke-width="1.9"/><rect x="6.4" y="332.7" width="9" height="8.6" rx="1.8" fill="#c8c8c8"/>
<path d="M6 360.6L13.8 367L6.4 371.2Z" fill="#c8c8c8"/>
<path d="M11.3 374H27.900000000000002M19.6 365.7V382.3M14.0 371.3L11.3 374L14.0 376.7M25.200000000000003 371.3L27.900000000000002 374L25.200000000000003 376.7M16.900000000000002 368.4L19.6 365.7L22.3 368.4M16.900000000000002 379.6L19.6 382.3L22.3 379.6" stroke="#c8c8c8" stroke-width="1.7"/>
<path d="M9.40 394.60L13.73 397.10L9.4 399.6L5.07 397.10Z" fill="#c4c4c4"/><path d="M5.07 397.10L9.4 399.6L9.40 404.60L5.07 402.10Z" fill="#b0b0b0"/><path d="M9.4 399.6L13.73 397.10L13.73 402.10L9.40 404.60Z" fill="#7c7c7c"/>
<path d="M25.00 394.10L28.64 396.20L25 398.3L21.36 396.20Z" fill="#c4c4c4"/><path d="M21.36 396.20L25 398.3L25.00 402.50L21.36 400.40Z" fill="#b0b0b0"/><path d="M25 398.3L28.64 396.20L28.64 400.40L25.00 402.50Z" fill="#7c7c7c"/>
<path d="M8.00 410.80L11.64 412.90L8 415L4.36 412.90Z" fill="#c4c4c4"/><path d="M4.36 412.90L8 415L8.00 419.20L4.36 417.10Z" fill="#b0b0b0"/><path d="M8 415L11.64 412.90L11.64 417.10L8.00 419.20Z" fill="#7c7c7c"/>
<path d="M11.3 410H27.900000000000002M19.6 401.7V418.3M14.0 407.3L11.3 410L14.0 412.7M25.200000000000003 407.3L27.900000000000002 410L25.200000000000003 412.7M16.900000000000002 404.4L19.6 401.7L22.3 404.4M16.900000000000002 415.6L19.6 418.3L22.3 415.6" stroke="#c8c8c8" stroke-width="1.7"/>
<path d="M14.0 455.5L17.7 444.2L23.6 441.9L28.1 446.1L26.4 451.8Z" stroke="#c8c8c8" stroke-width="1.5"/><path d="M14.6 454.9L21.0 448.9" stroke="#c8c8c8" stroke-width="1.3"/><circle cx="21.8" cy="448.2" r="1.5" fill="#c8c8c8"/>
<circle cx="7" cy="458.6" r="2" fill="#eba54a"/><circle cx="27" cy="458.6" r="2" fill="#eba54a"/><path d="M9 461Q17 467.4 24.6 460.8" stroke="#c8c8c8" stroke-width="1.7"/>
<path d="M33.5 469.5h-4.5L33.5 465.0Z" fill="#8a8a8a"/>
<path d="M14.0 491.6L17.7 480.3L23.6 478.0L28.1 482.2L26.4 487.9Z" stroke="#c8c8c8" stroke-width="1.5"/><path d="M14.6 491.0L21.0 485.0" stroke="#c8c8c8" stroke-width="1.3"/><circle cx="21.8" cy="484.3" r="1.5" fill="#c8c8c8"/>
<rect x="5" y="493.2" width="8" height="7.8" fill="#eba54a"/>
<path d="M14.0 527.4L17.7 516.1L23.6 513.8L28.1 518.0L26.4 523.7Z" stroke="#c8c8c8" stroke-width="1.5"/><path d="M14.6 526.8L21.0 520.8" stroke="#c8c8c8" stroke-width="1.3"/><circle cx="21.8" cy="520.1" r="1.5" fill="#c8c8c8"/>
<path d="M9.00 514.40L12.98 516.70L9 519L5.02 516.70Z" fill="#f0ab4e"/><path d="M5.02 516.70L9 519L9.00 523.60L5.02 521.30Z" fill="#eba54a"/><path d="M9 519L12.98 516.70L12.98 521.30L9.00 523.60Z" fill="#c98a38"/>
<path d="M10.00 527.40L13.98 529.70L10 532L6.02 529.70Z" fill="#f0ab4e"/><path d="M6.02 529.70L10 532L10.00 536.60L6.02 534.30Z" fill="#eba54a"/><path d="M10 532L13.98 529.70L13.98 534.30L10.00 536.60Z" fill="#c98a38"/>
<path d="M25.00 527.40L28.98 529.70L25 532L21.02 529.70Z" fill="#f0ab4e"/><path d="M21.02 529.70L25 532L25.00 536.60L21.02 534.30Z" fill="#eba54a"/><path d="M25 532L28.98 529.70L28.98 534.30L25.00 536.60Z" fill="#c98a38"/>
<path d="M26.4 555.6L16.2 566.4" stroke="#c8c8c8" stroke-width="3.3"/><circle cx="11.2" cy="571.6" r="2.6" stroke="#c8c8c8" stroke-width="1.4"/><path d="M8.8 573.4L7 573.6" stroke="#c8c8c8" stroke-width="1.4"/>
<path d="M14.4 602.8L18.1 591.5L24.0 589.2L28.5 593.4L26.8 599.1Z" stroke="#c8c8c8" stroke-width="1.5"/><path d="M15.0 602.2L21.4 596.2" stroke="#c8c8c8" stroke-width="1.3"/><circle cx="22.2" cy="595.5" r="1.5" fill="#c8c8c8"/>
<path d="M6 611H7.8M10 611H24M26 611H28" stroke="#eba54a" stroke-width="2" stroke-linecap="butt"/>
<path d="M33.5 618h-4.5L33.5 613.5Z" fill="#8a8a8a"/>
<path d="M7.40 629.60C7.95 629.25,9.80 627.58,10.70 627.50C11.60 627.42,12.74 628.15,12.80 629.10C12.86 630.05,11.75 631.70,11.05 633.20C10.35 634.70,8.86 636.77,8.60 638.10C8.34 639.43,8.86 640.73,9.50 641.20C10.14 641.67,11.38 641.70,12.45 640.90C13.52 640.10,14.74 637.59,15.90 636.40C17.06 635.21,18.30 634.05,19.40 633.75C20.50 633.45,21.80 633.99,22.50 634.60C23.20 635.21,23.60 636.23,23.60 637.40C23.60 638.57,23.08 640.27,22.50 641.60C21.92 642.93,20.97 644.70,20.10 645.40C19.23 646.10,17.88 646.08,17.30 645.80C16.72 645.52,16.42 644.58,16.60 643.70C16.78 642.82,17.58 641.32,18.40 640.50C19.22 639.68,20.17 639.05,21.50 638.80C22.83 638.55,25.58 638.97,26.40 639.00" stroke="#c8c8c8" stroke-width="2.7"/>
<path d="M33.5 654h-4.5L33.5 649.5Z" fill="#8a8a8a"/>
<path d="M824.6 127.6V120.9M827.3 126V119.1M829.8 126V120M832.4 121.5V127.2C832.4 131.2,829.4 132.6,827 132.6C824.4 132.6,822.2 129.6,820.4 126.5C821.8 125.6,823.4 126.6,824.6 128.8" stroke="#a2a2a2" stroke-width="1.25"/>
<path d="M846.9 119.2L850.5 123.2H843.3Z" fill="#a2a2a2" stroke="#a2a2a2" stroke-width="0.6"/><path d="M846.9 123V127.8M840.6999999999999 127.8H853.1L846.9 132.6Z" stroke="#a2a2a2" stroke-width="1.3"/>
<path d="M862.6 121.3A6.6 6.6 0 1 0 872.6 122.6" stroke="#a2a2a2" stroke-width="1.3"/><circle cx="870.4" cy="120.6" r="1.5" stroke="#a2a2a2" stroke-width="1"/><circle cx="867" cy="126.1" r="2" fill="#a2a2a2"/>
<rect x="880.4" y="119.4" width="13.2" height="13.2" rx="1.4" stroke="#a2a2a2" stroke-width="1.3"/><path d="M880.4 124.6H888.6V132.6" stroke="#a2a2a2" stroke-width="1.3"/>
<path d="M909.8 120.2V138.6H928.4M906.4 123.8L909.8 120L913.2 123.8M924.8 135.2L928.6 138.6L924.8 142" stroke="#c9ccff" stroke-width="1.8"/><circle cx="922" cy="126.2" r="6" fill="#c9ccff"/>
<rect x="908.7" y="168.1" width="17" height="17" stroke="#8fd4f5" stroke-width="2" stroke-linejoin="miter"/>
<path d="M943 114.8H957M943 118.8H957M943 122.8H957" stroke="#9a9a9a" stroke-width="1.9" stroke-linecap="butt"/>
<circle cx="1329.5" cy="117" r="4.5" stroke="#9a9a9a" stroke-width="1.3"/><path d="M1332.8 120.4L1337.6 125.2" stroke="#9a9a9a" stroke-width="1.4"/>
<path d="M1345.6 117.2L1351 112.6L1356.4 117.2V125.4H1353V120.8H1349V125.4H1345.6Z" stroke="#9a9a9a" stroke-width="1.3" stroke-linejoin="miter"/>
<path d="M1364 115H1378M1366.4 118.9H1375.6M1368.8 122.9H1373.2" stroke="#9a9a9a" stroke-width="1.6" stroke-linecap="butt"/>
<path d="M1390.4 112.6H1385.8a1.3 1.3 0 0 0 -1.3 1.3V124.2a1.3 1.3 0 0 0 1.3 1.3H1400M1388.4 121.8L1398 112.2M1393 112.4H1399" stroke="#9a9a9a" stroke-width="1.3"/>
<path d="M945.5 132V142.5H954" stroke="#5a5a5a" stroke-width="1" stroke-linecap="butt"/>
<path d="M961.40 135.80L967.12 139.10L961.4 142.4L955.68 139.10Z" fill="#c4f0ff"/><path d="M955.68 139.10L961.4 142.4L961.40 149.00L955.68 145.70Z" fill="#7ed6f8"/><path d="M961.4 142.4L967.12 139.10L967.12 145.70L961.40 149.00Z" fill="#58bfee"/>
<path d="M955.68 139.10L961.4 142.4L967.12 139.10M961.4 142.4V149.00" stroke="#eafaff" stroke-width="0.8"/>
<rect x="1015.8" y="137" width="10.2" height="10" rx="2" fill="#5c5c5c"/><path d="M1018.6 144.4L1023.2 139.6" stroke="#262626" stroke-width="1.6"/>
<circle cx="1034.6" cy="138.2" r="2.9" fill="#686868"/><circle cx="1034.6" cy="146.6" r="2.9" fill="#686868"/>
<path d="M1041.8 142.2L1045.6 145.6L1053 138" stroke="#4fd36b" stroke-width="2"/>
<path d="M1064 146.4V135.2H1075.4Q1067 137,1064.2 142.8" stroke="#9a90e6" stroke-width="1.4"/>
<rect x="40.5" y="873.5" width="856" height="4" fill="url(#dots)" transform="translate(0,0)"/>
<rect x="37.5" y="885" width="4" height="21" fill="url(#dots2)"/><rect x="37.5" y="915" width="4" height="37" fill="url(#dots2)"/>
<path d="M58 887.4L65.4 894.8L58 902.1999999999999L50.6 894.8Z" stroke="#d2d2d2" stroke-width="1.7" stroke-linejoin="miter"/>
<path d="M127.4 889.0V900.5999999999999M138.4 889.1999999999999L130.6 894.8L138.4 900.4Z" stroke="#cfcfcf" stroke-width="1.4" stroke-linejoin="miter"/>
<path d="M155.6 891.1999999999999L159.2 894.8L155.6 898.4L152.0 894.8Z" fill="#cfcfcf"/>
<path d="M169.4 889.1999999999999L161.6 894.8L169.4 900.4Z" stroke="#cfcfcf" stroke-width="1.4" stroke-linejoin="miter"/>
<path d="M193.6 889.0V900.5999999999999M190.4 889.1999999999999L182.6 894.8L190.4 900.4Z" stroke="#cfcfcf" stroke-width="1.4" stroke-linejoin="miter"/>
<path d="M212 887.4L223.4 894.8L212 902.1999999999999Z" stroke="#cfcfcf" stroke-width="1.4" stroke-linejoin="miter"/>
<path d="M240.4 889.0V900.5999999999999M243.6 889.1999999999999L251.4 894.8L243.6 900.4Z" stroke="#cfcfcf" stroke-width="1.4" stroke-linejoin="miter"/>
<path d="M264.6 889.1999999999999L272.4 894.8L264.6 900.4Z" stroke="#cfcfcf" stroke-width="1.4" stroke-linejoin="miter"/>
<path d="M278.4 891.1999999999999L282.0 894.8L278.4 898.4L274.79999999999995 894.8Z" fill="#cfcfcf"/>
<path d="M306.6 889.0V900.5999999999999M295.6 889.1999999999999L303.4 894.8L295.6 900.4Z" stroke="#cfcfcf" stroke-width="1.4" stroke-linejoin="miter"/>
<path d="M332.2 893.8V890.5999999999999H346M343 887.5999999999999L346 890.5999999999999L343 893.5999999999999M346 895.8V899.1999999999999H332.2M335.2 896.1999999999999L332.2 899.1999999999999L335.2 902.1999999999999" stroke="#e4e4e4" stroke-width="1.5"/>
<path d="M351.5 908h-4L351.5 904Z" fill="#a0a0c8"/>
<text x="366.9" y="894.8" font-size="9.5" text-anchor="middle" fill="#e4e4e4" stroke="none">A</text>
<path d="M358.6 897.4v4.6M361.8 897.4v4.6M365 897.4v4.6" stroke="#e4e4e4" stroke-width="1.3" stroke-linecap="butt"/><rect x="370.2" y="897.4" width="6.2" height="4.6" fill="#e4e4e4"/>
<path d="M379.5 908h-4L379.5 904Z" fill="#a0a0c8"/>
<path d="M387.0 892.1999999999999H390.0L394.0 888.8V900.8L390.0 897.4H387.0Z" stroke="#cfcfcf" stroke-width="1.3"/><path d="M396.59999999999997 891.4a4.6 4.6 0 0 1 0 6.8M399.0 888.4a8.6 8.6 0 0 1 0 12.8" stroke="#cfcfcf" stroke-width="1.4"/>
<circle cx="522.6" cy="894.8" r="8.4" stroke="#5e3f3d" stroke-width="1.4"/><path d="M522.6 891.1999999999999L526.2 894.8L522.6 898.4L519.0 894.8Z" fill="#5a5a5a"/>
<path d="M536.5 908.4h-5L536.5 903.4Z" fill="#8a8a8a"/>
<circle cx="551" cy="894.8" r="8.4" stroke="#d96b5c" stroke-width="1.6"/><path d="M547.2 899.4L551 889.8L554.8 899.4M548.5 896.3H553.5" stroke="#d8d8d8" stroke-width="1.25"/>
<circle cx="579" cy="894.8" r="8.4" stroke="#cfcfcf" stroke-width="1.6"/><path d="M577.71 891.55L577.83 890.04L580.17 890.04L580.29 891.55L581.17 892.06L582.54 891.41L583.71 893.43L582.46 894.29L582.46 895.31L583.71 896.17L582.54 898.19L581.17 897.54L580.29 898.05L580.17 899.56L577.83 899.56L577.71 898.05L576.83 897.54L575.46 898.19L574.29 896.17L575.54 895.31L575.54 894.29L574.29 893.43L575.46 891.41L576.83 892.06ZM577.00 894.80a2.00 2.00 0 1 0 4.00 0a2.00 2.00 0 1 0 -4.00 0Z" fill="#cfcfcf" fill-rule="evenodd" stroke="#cfcfcf" stroke-width="0.6" stroke-linejoin="round"/>
<path d="M616.8 890.5L621.0999999999999 894.8L616.8 899.0999999999999L612.5 894.8Z" fill="#cfcfcf"/>
<path d="M613.5999999999999 888.8L616.8 885.8L620.0 888.8M613.5999999999999 900.8L616.8 903.8L620.0 900.8M610.8 891.5999999999999L607.8 894.8L610.8 898.0M622.8 891.5999999999999L625.8 894.8L622.8 898.0" stroke="#cfcfcf" stroke-width="1.5" stroke-linejoin="miter"/>
<path d="M645 889.9L649.9 894.8L645 899.6999999999999L640.1 894.8Z" fill="#cfcfcf"/>
<path d="M645.6 903.5999999999999A8.8 8.8 0 0 0 649 886.8M652.8 886.4H648.8V890.4M644.4 886.0A8.8 8.8 0 0 0 641 902.8M637.2 903.1999999999999H641.2V899.1999999999999" stroke="#cfcfcf" stroke-width="1.7"/>
<path d="M669.6 893.8L674.2 898.4L669.6 903.0L665.0 898.4Z" fill="#cfcfcf"/>
<path d="M665.4 892.8V887.8H680.6V902.4H675.4" stroke="#cfcfcf" stroke-width="1.7" stroke-linejoin="miter"/>
<rect x="693.2" y="887.8" width="16" height="6.2" rx="3.1" fill="#cfcfcf"/><rect x="693.2" y="895.8" width="16" height="6.2" rx="3.1" fill="#cfcfcf"/><circle cx="696.6" cy="890.9" r="1.5" fill="#3a3a3a"/><circle cx="705.8000000000001" cy="898.9" r="1.5" fill="#3a3a3a"/>
<path d="M722 885.6L736.4 902.4" stroke="#dcdcdc" stroke-width="1.4"/><circle cx="724.3" cy="899.6" r="2.9" fill="#dcdcdc"/>
<path d="M725.5 889.3A3.1 3.1 0 0 1 729.6 894.1Z" fill="#dcdcdc" transform="translate(1.1,-0.9)"/>
<path d="M735.3 901.2A2.6 2.6 0 0 1 731.9 897.2Z" fill="#dcdcdc" transform="translate(-0.9,0.8)"/>
<circle cx="777" cy="895.0" r="8.4" stroke="#cfcfcf" stroke-width="1.6"/><rect x="773.6" y="889.1999999999999" width="6.8" height="11.6" rx="3.4" fill="#cfcfcf"/><path d="M773.6 893.5999999999999H780.4M777 889.1999999999999V893.5999999999999" stroke="#4a4a4a" stroke-width="0.9" stroke-linecap="butt"/>
<path d="M800.4 902.0A8.6 8.6 0 0 1 805.6 886.1999999999999M812.2 890.1999999999999A8.6 8.6 0 0 1 809.6 902.0" stroke="#cfcfcf" stroke-width="1.6"/>
<path d="M804.2 890.8L809.0 895.5999999999999L804.2 900.3999999999999L799.4000000000001 895.5999999999999Z" fill="#cfcfcf"/><path d="M806 893.8L811.4 888.0" stroke="#cfcfcf" stroke-width="2.2"/>
<path d="M874.4 886.8V900.5999999999999H888.1999999999999M871.5999999999999 889.5999999999999L874.4 886.5999999999999L877.1999999999999 889.5999999999999M885.4 897.8L888.4 900.5999999999999L885.4 903.4M874.4 900.5999999999999L885.4 889.8M881.4 889.4H885.8V893.8" stroke="#cfcfcf" stroke-width="1.5"/>
<path d="M4 963.4H18M4 967.4H18M4 971.4H18" stroke="#9a9a9a" stroke-width="1.9" stroke-linecap="butt"/>
<path d="M41.4 968.6A6 6 0 1 1 38.6 963.4M32.6 968L35.2 970.8L41.4 963.2" stroke="#9a9a9a" stroke-width="1.4"/>
</svg>
<!-- renderview -->
<div class="b" style="left:611px;top:179px;width:786px;height:592px;border:1px solid #4c4c4c;border-radius:8px;background:#2b2b2b;overflow:hidden;box-shadow:0 10px 40px rgba(0,0,0,.30)">
</div>
<div class="b" style="left:612px;top:180px;width:784px;height:29px;background:#f3f3f9;border-radius:7px 7px 0 0"></div>
<span class="t" style="left:641px;top:186px;font-size:12px;line-height:17px;height:17px;color:#1a1a1a;letter-spacing:-0.18px">Redshift RenderView</span>
<div class="b" style="left:612px;top:231px;width:785px;height:1px;background:#1f1f1f;"></div>
<span class="t" style="left:618px;top:236px;font-size:12px;line-height:17px;height:17px;color:#c3c3c3;">文件</span>
<span class="t" style="left:654px;top:236px;font-size:12px;line-height:17px;height:17px;color:#c3c3c3;">视图</span>
<span class="t" style="left:690px;top:236px;font-size:12px;line-height:17px;height:17px;color:#c3c3c3;">首选项</span>
<div class="b" style="left:646px;top:256px;width:31px;height:31px;background:#5a5ea8;"></div>
<div class="b" style="left:1028px;top:256px;width:31px;height:31px;background:#5a5ea8;"></div>
<div class="b" style="left:1096px;top:256px;width:31px;height:31px;background:#5a5ea8;"></div>
<div class="b" style="left:715px;top:263px;width:93px;height:18.5px;background:#6b6b6b;border-radius:4px"></div>
<div class="b" style="left:931px;top:263px;width:93px;height:18.5px;background:#6b6b6b;border-radius:4px"></div>
<span class="t" style="left:721px;top:266px;font-size:11.5px;line-height:14px;height:14px;color:#ececec;font-family:'Liberation Serif',serif;letter-spacing:0.75px">Beauty</span>
<span class="t" style="left:948px;top:263px;font-size:12px;line-height:18px;height:18px;color:#ececec;">渲染</span>
<div class="b" style="left:612px;top:288.5px;width:785px;height:6.5px;background:#333;"></div>
<div class="b" style="left:612px;top:295px;width:784px;height:441px;background:#000;"></div>
<div class="b" style="left:612px;top:736px;width:785px;height:6.4px;background:#343434;"></div>
<svg width="1397" height="976" viewBox="0 0 1397 976" fill="none" stroke-linecap="round" stroke-linejoin="round"><g stroke-width="0.5" stroke-linejoin="round"><polygon points="879.5,432.9 1004.2,407.9 1128.7,432.9 1004.2,465.6" fill="#5e5e5e" stroke="#5e5e5e"/><polygon points="879.5,432.9 1004.2,465.6 1004,650.6 888.4,592.3" fill="#a5a5a5" stroke="#a5a5a5"/><polygon points="1004.2,465.6 1128.7,432.9 1119.8,592.5 1004,650.6" fill="#7a7a7a" stroke="#7a7a7a"/></g><polygon points="628.00,186.22 633.82,189.81 633.82,196.99 628.00,200.58 622.18,196.99 622.18,189.81" fill="#1d1fa8" stroke="#1d1fa8" stroke-width="1"/><circle cx="628" cy="193.216" r="4.140000000000001" fill="#2a2cc0" stroke="#5b78f0" stroke-width="0.92"/><circle cx="628.184" cy="193.308" r="2.8520000000000003" fill="url(#lg)"/><g stroke="#1a1a1a" stroke-width="1.1"><path d="M1277 193.5H1287"/><rect x="1322.5" y="188.5" width="9.5" height="9.5" rx="1"/><path d="M1368 188.4l10 10M1378 188.4l-10 10"/></g><path d="M618 216.3H632M618 220.3H632M618 224.3H632" stroke="#f0f0f0" stroke-width="1.7" stroke-linecap="butt"/><path d="M615.4 266.6H638.8V278.4a2 2 0 0 1 -2 2H617.4a2 2 0 0 1 -2 -2Z" fill="#808080"/><path d="M615.4 266.6V263.4a1.6 1.6 0 0 1 1.6 -1.6H620l2.2 4.8ZM623 261.8h3.4l2.2 4.8h-3.4ZM629.4 261.8h3.4l2.2 4.8h-3.4ZM635.8 261.8h1.4a1.6 1.6 0 0 1 1.6 1.6v3.2h-0.8Z" fill="#808080"/><circle cx="661.4" cy="271.4" r="11.4" fill="#808080"/><path d="M657.8 266.2V276.6L666.4 271.4Z" fill="#5559b4"/><path d="M702.6 266.2A8.7 8.7 0 1 0 703.4 275.4" stroke="#808080" stroke-width="2.3" stroke-linecap="butt"/><path d="M705.4 260.6V269.4H696.6Z" fill="#808080"/><path d="M795.4 270.2h8.6l-4.3 4.4ZM1012 270.2h8.6l-4.3 4.4Z" fill="#e4e4e4"/><path d="M848 268.8h9.2l-4.6 5.2ZM1200 268.8h9.2l-4.6 5.2Z" fill="#cdcdcd"/><path d="M941.6 267.2L937.6 272L941.6 276.8M979.8 267.2L983.8 272L979.8 276.8" stroke="#e4e4e4" stroke-width="1.1"/><circle cx="829" cy="272" r="11.7" fill="#808080"/><text x="829" y="275.2" font-size="8.6" font-weight="bold" text-anchor="middle" fill="#2b2b2b" stroke="none" letter-spacing="-0.3">RGB</text><g fill="#808080"><circle cx="865.5" cy="268.6" r="0.35"/><circle cx="865.5" cy="273.1" r="0.35"/><circle cx="870.0" cy="264.1" r="0.61"/><circle cx="870.0" cy="268.6" r="0.94"/><circle cx="870.0" cy="273.1" r="0.94"/><circle cx="870.0" cy="277.6" r="0.61"/><circle cx="874.5" cy="259.6" r="0.35"/><circle cx="874.5" cy="264.1" r="0.94"/><circle cx="874.5" cy="268.6" r="1.47"/><circle cx="874.5" cy="273.1" r="1.47"/><circle cx="874.5" cy="277.6" r="0.94"/><circle cx="874.5" cy="282.1" r="0.35"/><circle cx="879.0" cy="259.6" r="0.35"/><circle cx="879.0" cy="264.1" r="0.94"/><circle cx="879.0" cy="268.6" r="1.47"/><circle cx="879.0" cy="273.1" r="1.47"/><circle cx="879.0" cy="277.6" r="0.94"/><circle cx="879.0" cy="282.1" r="0.35"/><circle cx="883.5" cy="264.1" r="0.61"/><circle cx="883.5" cy="268.6" r="0.94"/><circle cx="883.5" cy="273.1" r="0.94"/><circle cx="883.5" cy="277.6" r="0.61"/><circle cx="888.0" cy="268.6" r="0.35"/><circle cx="888.0" cy="273.1" r="0.35"/></g><path d="M904 258.6V278H923.2M898.4 264.2H917.4V283.6" stroke="#808080" stroke-width="2.2" stroke-linecap="butt" stroke-linejoin="miter"/><rect x="1033.6" y="267.4" width="18.6" height="14.8" rx="2.4" fill="#808080"/><path d="M1038 267.6V264.6a4.9 4.9 0 0 1 9.8 0V267.6" stroke="#808080" stroke-width="2.3"/><circle cx="1042.9" cy="274.4" r="2.3" fill="#5559b4"/><g fill="#808080"><rect x="1064.8" y="259.0" width="6.6" height="6.4" rx="1"/><rect x="1064.8" y="267.6" width="6.6" height="6.4" rx="1"/><rect x="1064.8" y="276.2" width="6.6" height="6.4" rx="1"/><rect x="1073.5" y="259.0" width="6.6" height="6.4" rx="1"/><rect x="1073.5" y="267.6" width="6.6" height="6.4" rx="1"/><rect x="1073.5" y="276.2" width="6.6" height="6.4" rx="1"/><rect x="1082.2" y="259.0" width="6.6" height="6.4" rx="1"/><rect x="1082.2" y="267.6" width="6.6" height="6.4" rx="1"/><rect x="1082.2" y="276.2" width="6.6" height="6.4" rx="1"/></g><path d="M1111.30 271.20L1111.30 259.60M1111.30 265.40L1107.85 262.30M1111.30 265.40L1114.75 262.30M1111.30 271.20L1121.35 265.40M1116.32 268.30L1117.29 263.76M1116.32 268.30L1120.74 269.73M1111.30 271.20L1121.35 277.00M1116.32 274.10L1120.74 272.67M1116.32 274.10L1117.29 278.64M1111.30 271.20L1111.30 282.80M1111.30 277.00L1114.75 280.10M1111.30 277.00L1107.85 280.10M1111.30 271.20L1101.25 277.00M1106.28 274.10L1105.31 278.64M1106.28 274.10L1101.86 272.67M1111.30 271.20L1101.25 265.40M1106.28 268.30L1101.86 269.73M1106.28 268.30L1105.31 263.76" stroke="#808080" stroke-width="1.9" stroke-linecap="butt"/><path d="M1143.60 270.60L1143.60 259.80M1143.60 265.20L1140.39 262.31M1143.60 265.20L1146.81 262.31M1143.60 270.60L1152.95 265.20M1148.28 267.90L1149.17 263.67M1148.28 267.90L1152.39 269.23M1143.60 270.60L1152.95 276.00M1148.28 273.30L1152.39 271.97M1148.28 273.30L1149.17 277.53M1143.60 270.60L1143.60 281.40M1143.60 276.00L1146.81 278.89M1143.60 276.00L1140.39 278.89M1143.60 270.60L1134.25 276.00M1138.92 273.30L1138.03 277.53M1138.92 273.30L1134.81 271.97M1143.60 270.60L1134.25 265.20M1138.92 267.90L1134.81 269.23M1138.92 267.90L1138.03 263.67" stroke="#808080" stroke-width="1.9" stroke-linecap="butt"/><rect x="1147.6" y="274" width="10" height="10" fill="#2b2b2b"/><text x="1152.7" y="283.2" font-size="12" font-weight="bold" text-anchor="middle" fill="#808080" stroke="none">G</text><circle cx="1180.8" cy="272.2" r="10.6" stroke="#808080" stroke-width="2.1"/><path d="M1219.4 266.90000000000003V263.3a2 2 0 0 1 2 -2H1225.0M1233.0 261.3H1236.6a2 2 0 0 1 2 2V266.90000000000003M1238.6 274.5V278.1a2 2 0 0 1 -2 2H1233.0M1225.0 280.1H1221.4a2 2 0 0 1 -2 -2V274.5" stroke="#808080" stroke-width="2.1" stroke-linecap="butt"/><circle cx="1228.8" cy="271.2" r="3.3" fill="#808080"/><path d="M1253.4 266.90000000000003V263.3a2 2 0 0 1 2 -2H1259.0M1267.0 261.3H1270.6a2 2 0 0 1 2 2V266.90000000000003M1272.6 274.5V278.1a2 2 0 0 1 -2 2H1267.0M1259.0 280.1H1255.4a2 2 0 0 1 -2 -2V274.5" stroke="#808080" stroke-width="2.1" stroke-linecap="butt"/><path d="M1256.6 277.6L1261.4 271.4L1264.4 275.2L1266.4 273L1269.8 277.6Z" fill="#808080"/><circle cx="1267" cy="266.6" r="1.8" fill="#808080"/><path d="M1287.2 266.90000000000003V263.3a2 2 0 0 1 2 -2H1292.8M1300.8000000000002 261.3H1304.4a2 2 0 0 1 2 2V266.90000000000003M1306.4 274.5V278.1a2 2 0 0 1 -2 2H1300.8000000000002M1292.8 280.1H1289.2a2 2 0 0 1 -2 -2V274.5" stroke="#808080" stroke-width="2.1" stroke-linecap="butt"/><path d="M1290 272.6L1298.4 264.2M1290.4 278.8L1305 264.2M1297 278.8L1305 270.8" stroke="#808080" stroke-width="3" stroke-linecap="butt"/><path d="M1319.2 264.4V280.4a1.7 1.7 0 0 0 1.7 1.7H1337.6M1353.2 264.4V280.4a1.7 1.7 0 0 0 1.7 1.7H1371.6" stroke="#808080" stroke-width="2" stroke-linecap="butt"/><rect x="1324" y="259" width="18.8" height="19" rx="2.6" fill="#808080"/><path d="M1327 275L1331.6 269.2L1334.4 272.6L1336.6 270.4L1340.2 275Z" fill="#2b2b2b"/><rect x="1357.8" y="259" width="18.8" height="19" rx="2.6" fill="#808080"/><path d="M1362 268.5H1372.4M1367.2 263.3V273.7" stroke="#2b2b2b" stroke-width="1.9" stroke-linecap="butt"/><path d="M1388 267.6L1391.6 271.4L1388 275.2M1393 267.6L1396.6 271.4L1393 275.2" stroke="#3e3e3e" stroke-width="1.3"/></svg>
<span class="t" style="left:1250px;top:750px;font-size:12px;line-height:18px;height:18px;color:#d4d4d4;">渐进渲染</span>
<div class="b" style="left:1306px;top:752px;width:91px;height:14px;background:#2b2b2b;border-bottom:1px solid #6a6a6a;border-left:1px solid #202020;border-top:1px solid #202020"></div>
<div class="b" style="left:1307px;top:753px;width:6px;height:11px;background:#8fa8d0;"></div>
<span class="t" style="left:1345px;top:754px;font-size:10px;line-height:12px;height:12px;color:#7a7a7a;font-family:'Liberation Mono',monospace">7%</span>
</body></html>
